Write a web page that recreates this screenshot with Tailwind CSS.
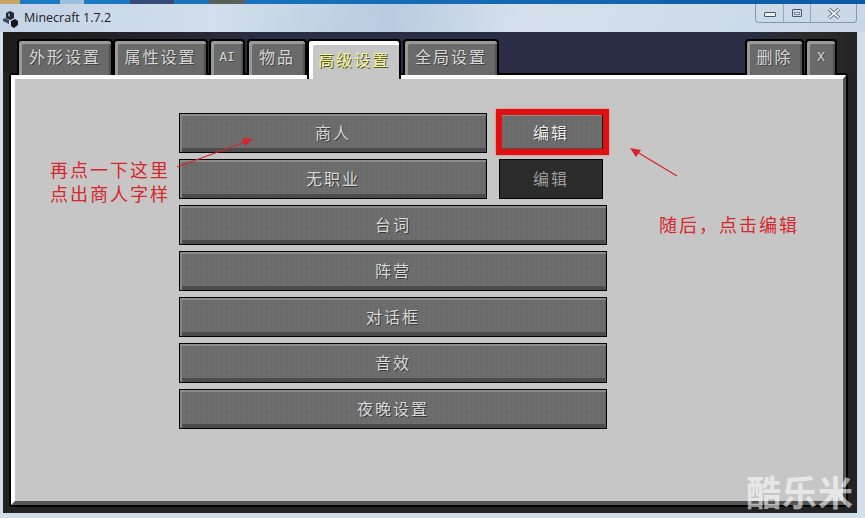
<!DOCTYPE html>
<html lang="zh">
<head>
    <meta charset="UTF-8">
    <title>Minecraft 1.7.2</title>
    <script src="https://cdn.jsdelivr.net/npm/@tailwindcss/browser@4"></script>
</head>
<body class="relative w-[865px] h-[518px] overflow-hidden bg-[#d3deeb] font-['Noto_Sans_CJK_SC',sans-serif]">

    <!-- desktop strip above the window -->
    <div class="flex h-[4px] bg-[linear-gradient(90deg,#1f7cc4,#0b5aa6)]">
        <div class="w-[20px] bg-[#c9a467]"></div>
        <div class="w-[40px]"></div>
        <div class="w-[24px] bg-[#9cc0dd]"></div>
        <div class="w-[46px]"></div>
        <div class="w-[44px] bg-[#3a4a78]"></div>
        <div class="w-[35px]"></div>
        <div class="w-[36px] bg-[#5a5f58]"></div>
    </div>

    <!-- title bar -->
    <div class="flex justify-between h-[28px] pl-[3px] pr-[8px] bg-[linear-gradient(100deg,#c3d3e6_0%,#d2deeb_25%,#b9cbe0_45%,#d5e0ec_60%,#c9d7e7_100%)]">
        <div class="flex items-center gap-[6px]">
            <svg width="15" height="17" viewBox="0 0 15 17" class="mt-[2px]">
                <path d="M7 0l4 2v5L7 9 3 7V2z" fill="#222733"/>
                <path d="M2 7l4 2v4l-4-2-2-1V8z" fill="#3b4a66"/>
                <path d="M8 10l4-2 3 2v4l-4 3-3-2z" fill="#14161c"/>
                <path d="M5 2l2 1v3L5 5z" fill="#7f93b3"/>
            </svg>
            <span class="font-['Open_Sans',sans-serif] text-[12.5px] text-[#222]">Minecraft 1.7.2</span>
        </div>
        <div class="flex h-[19px] w-[102px] border border-t-0 border-[#8a97a8] rounded-b-[4px]">
            <div class="flex items-center justify-center w-[28px] border-r border-[#9aa7b6]">
                <div class="w-[12px] h-[5px] mt-[3px] border border-[#4a5664] bg-[#eef2f6] rounded-[1px]"></div>
            </div>
            <div class="flex items-center justify-center w-[27px] border-r border-[#9aa7b6]">
                <div class="w-[10px] h-[8px] border border-[#4a5664] rounded-[1px] flex items-center justify-center">
                    <div class="w-[6px] h-[3px] border border-[#7a8694] bg-[#eef2f6]"></div>
                </div>
            </div>
            <div class="flex items-center justify-center flex-1">
                <svg width="14" height="11" viewBox="0 0 14 11">
                    <path d="M2 1l10 9M12 1L2 10" stroke="#4a5664" stroke-width="3.4"/>
                    <path d="M2 1l10 9M12 1L2 10" stroke="#eef2f6" stroke-width="1.8"/>
                </svg>
            </div>
        </div>
    </div>

    <!-- game area -->
    <div class="ml-[3px] w-[854px] h-[481px] bg-[#232323]">

        <!-- tabs -->
        <div class="flex items-start h-[41px] pt-[7px] pl-[14px] pr-[20px] bg-[linear-gradient(90deg,#1d1b1b_0%,#25242c_18%,#2a2d43_30%,#2a2d43_88%,#2c2c2c_94%,#242424_100%)]">
            <div class="relative z-10 flex justify-center pt-[3px] w-[96px] h-[36px] rounded-t-[4px] border-2 border-b-0 border-black bg-[#6a6a6a] shadow-[inset_3px_3px_0_#999999,inset_-2px_0_0_#505050] text-[16px] tracking-[2px] text-[#d6d6d6] [text-shadow:1px_1px_0_#444]">外形设置</div>
            <div class="relative z-10 flex justify-center pt-[3px] w-[95px] h-[36px] rounded-t-[4px] border-2 border-b-0 border-black bg-[#6a6a6a] shadow-[inset_3px_3px_0_#999999,inset_-2px_0_0_#505050] text-[16px] tracking-[2px] text-[#d6d6d6] [text-shadow:1px_1px_0_#444]">属性设置</div>
            <div class="relative z-10 ml-[1px] flex justify-center pt-[6px] w-[36px] h-[36px] rounded-t-[4px] border-2 border-b-0 border-black bg-[#6a6a6a] shadow-[inset_3px_3px_0_#999999,inset_-2px_0_0_#505050] font-['DejaVu_Sans_Mono',monospace] text-[13px] text-[#d6d6d6] [text-shadow:1px_1px_0_#444]">AI</div>
            <div class="relative z-10 ml-[2px] flex justify-center pt-[3px] w-[60px] h-[36px] rounded-t-[4px] border-2 border-b-0 border-black bg-[#6a6a6a] shadow-[inset_3px_3px_0_#999999,inset_-2px_0_0_#505050] text-[16px] tracking-[2px] text-[#d6d6d6] [text-shadow:1px_1px_0_#444]">物品</div>
            <div class="relative z-10 flex justify-center pt-[6px] w-[94px] h-[40px] rounded-t-[4px] border-2 border-b-0 border-black bg-[#c6c6c6] shadow-[inset_4px_4px_0_#ffffff] text-[16px] tracking-[2px] text-[#f4f49a] [text-shadow:1px_1px_0_#55552a]">高级设置</div>
            <div class="relative z-10 ml-[2px] flex justify-center pt-[3px] w-[96px] h-[36px] rounded-t-[4px] border-2 border-b-0 border-black bg-[#6a6a6a] shadow-[inset_3px_3px_0_#999999,inset_-2px_0_0_#505050] text-[16px] tracking-[2px] text-[#d6d6d6] [text-shadow:1px_1px_0_#444]">全局设置</div>
            <div class="relative z-10 ml-auto flex justify-center pt-[3px] w-[59px] h-[36px] rounded-t-[4px] border-2 border-b-0 border-black bg-[#6a6a6a] shadow-[inset_3px_3px_0_#999999,inset_-2px_0_0_#505050] text-[16px] tracking-[2px] text-[#d6d6d6] [text-shadow:1px_1px_0_#444]">删除</div>
            <div class="relative z-10 ml-[1px] flex justify-center pt-[6px] w-[32px] h-[36px] rounded-t-[4px] border-2 border-b-0 border-black bg-[#6a6a6a] shadow-[inset_3px_3px_0_#999999,inset_-2px_0_0_#505050] font-['DejaVu_Sans_Mono',monospace] text-[13px] text-[#d6d6d6] [text-shadow:1px_1px_0_#444]">X</div>
        </div>

        <!-- panel -->
        <div class="ml-[6px] w-[839px] h-[434px] border-2 border-black rounded-[3px]">
            <div class="flex flex-col gap-[6px] h-full pt-[34px] pl-[164px] border-t-4 border-l-4 border-r-[3px] border-b-4 border-t-white border-l-white border-r-[#555] border-b-[#555] bg-[#c6c6c6]">
                <div class="flex">
                    <button class="w-[308px] h-[40px] pb-[2px] border border-black bg-[#6c6c6c] bg-[repeating-linear-gradient(0deg,#0000_0,#0000_2px,#00000008_2px,#00000008_3px),repeating-linear-gradient(90deg,#0000_0,#0000_3px,#ffffff05_3px,#ffffff05_5px)] shadow-[inset_0_2px_0_#8c8c8c,inset_2px_0_0_#858585,inset_-1px_0_0_#5a5a5a,inset_0_-4px_0_#4c4c4c] text-[16px] tracking-[2px] text-[#d8d8d8] [text-shadow:1px_1px_0_#3a3a3a]">商人</button>
                    <div class="relative ml-[12px]">
                        <button class="w-[104px] h-[40px] pb-[2px] border border-black bg-[#6c6c6c] bg-[repeating-linear-gradient(0deg,#0000_0,#0000_2px,#00000008_2px,#00000008_3px),repeating-linear-gradient(90deg,#0000_0,#0000_3px,#ffffff05_3px,#ffffff05_5px)] shadow-[inset_0_2px_0_#8c8c8c,inset_0_-4px_0_#4c4c4c] text-[16px] tracking-[2px] text-[#ececec] [text-shadow:1px_1px_0_#3a3a3a]">编辑</button>
                        <div class="absolute -left-[3px] -top-[4px] w-[113px] h-[46px] border-[6px] border-[#e10f0f] shadow-[0_0_2px_#ee6666]"></div>
                    </div>
                </div>
                <div class="flex">
                    <button class="w-[308px] h-[40px] pb-[2px] border border-black bg-[#6c6c6c] bg-[repeating-linear-gradient(0deg,#0000_0,#0000_2px,#00000008_2px,#00000008_3px),repeating-linear-gradient(90deg,#0000_0,#0000_3px,#ffffff05_3px,#ffffff05_5px)] shadow-[inset_0_2px_0_#8c8c8c,inset_2px_0_0_#858585,inset_-1px_0_0_#5a5a5a,inset_0_-4px_0_#4c4c4c] text-[16px] tracking-[2px] text-[#d8d8d8] [text-shadow:1px_1px_0_#3a3a3a]">无职业</button>
                    <button class="ml-[12px] w-[104px] h-[40px] pb-[2px] border border-black bg-[#2b2b2b] text-[16px] tracking-[2px] text-[#9c9c9c]">编辑</button>
                </div>
                <button class="w-[428px] h-[40px] pb-[2px] border border-black bg-[#6c6c6c] bg-[repeating-linear-gradient(0deg,#0000_0,#0000_2px,#00000008_2px,#00000008_3px),repeating-linear-gradient(90deg,#0000_0,#0000_3px,#ffffff05_3px,#ffffff05_5px)] shadow-[inset_0_2px_0_#8c8c8c,inset_2px_0_0_#858585,inset_-1px_0_0_#5a5a5a,inset_0_-4px_0_#4c4c4c] text-[16px] tracking-[2px] text-[#d8d8d8] [text-shadow:1px_1px_0_#3a3a3a]">台词</button>
                <button class="w-[428px] h-[40px] pb-[2px] border border-black bg-[#6c6c6c] bg-[repeating-linear-gradient(0deg,#0000_0,#0000_2px,#00000008_2px,#00000008_3px),repeating-linear-gradient(90deg,#0000_0,#0000_3px,#ffffff05_3px,#ffffff05_5px)] shadow-[inset_0_2px_0_#8c8c8c,inset_2px_0_0_#858585,inset_-1px_0_0_#5a5a5a,inset_0_-4px_0_#4c4c4c] text-[16px] tracking-[2px] text-[#d8d8d8] [text-shadow:1px_1px_0_#3a3a3a]">阵营</button>
                <button class="w-[428px] h-[40px] pb-[2px] border border-black bg-[#6c6c6c] bg-[repeating-linear-gradient(0deg,#0000_0,#0000_2px,#00000008_2px,#00000008_3px),repeating-linear-gradient(90deg,#0000_0,#0000_3px,#ffffff05_3px,#ffffff05_5px)] shadow-[inset_0_2px_0_#8c8c8c,inset_2px_0_0_#858585,inset_-1px_0_0_#5a5a5a,inset_0_-4px_0_#4c4c4c] text-[16px] tracking-[2px] text-[#d8d8d8] [text-shadow:1px_1px_0_#3a3a3a]">对话框</button>
                <button class="w-[428px] h-[40px] pb-[2px] border border-black bg-[#6c6c6c] bg-[repeating-linear-gradient(0deg,#0000_0,#0000_2px,#00000008_2px,#00000008_3px),repeating-linear-gradient(90deg,#0000_0,#0000_3px,#ffffff05_3px,#ffffff05_5px)] shadow-[inset_0_2px_0_#8c8c8c,inset_2px_0_0_#858585,inset_-1px_0_0_#5a5a5a,inset_0_-4px_0_#4c4c4c] text-[16px] tracking-[2px] text-[#d8d8d8] [text-shadow:1px_1px_0_#3a3a3a]">音效</button>
                <button class="w-[428px] h-[40px] pb-[2px] border border-black bg-[#6c6c6c] bg-[repeating-linear-gradient(0deg,#0000_0,#0000_2px,#00000008_2px,#00000008_3px),repeating-linear-gradient(90deg,#0000_0,#0000_3px,#ffffff05_3px,#ffffff05_5px)] shadow-[inset_0_2px_0_#8c8c8c,inset_2px_0_0_#858585,inset_-1px_0_0_#5a5a5a,inset_0_-4px_0_#4c4c4c] text-[16px] tracking-[2px] text-[#d8d8d8] [text-shadow:1px_1px_0_#3a3a3a]">夜晚设置</button>
            </div>
        </div>
    </div>

    <!-- annotations drawn on top of the screenshot -->
    <svg class="absolute left-0 top-0 pointer-events-none" width="865" height="518" viewBox="0 0 865 518">
        <path d="M177 167L245 142" stroke="#d9232a" stroke-width="1.2"/>
        <path d="M253 139L242 138L245 146z" fill="#d9232a"/>
        <path d="M677 176L637 152" stroke="#d9232a" stroke-width="1.2"/>
        <path d="M630 148L641 150L636 157z" fill="#d9232a"/>
    </svg>
    <div class="absolute left-[50px] top-[157px] text-[18px] leading-[24px] tracking-[2px] text-[#d8262a]">
        <p>再点一下这里</p>
        <p>点出商人字样</p>
    </div>
    <div class="absolute left-[659px] top-[212px] text-[18px] leading-[24px] tracking-[2px] text-[#d8262a]">随后，点击编辑</div>
    <div class="absolute left-[746px] top-[473px] text-[35px] leading-none font-bold tracking-[1px] text-white/60">酷乐米</div>
</body>
</html>
